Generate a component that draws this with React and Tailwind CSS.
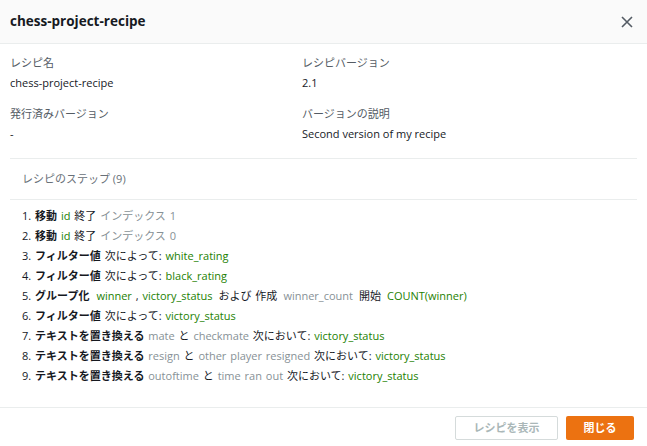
import React from 'react';

const G = ({ children }) => <span className="text-[#1d8102]">{children}</span>;
const M = ({ children }) => <span className="text-[#879196]">{children}</span>;
const B = ({ children }) => <span className="font-bold">{children}</span>;

function Detail({ label, value }) {
  return (
    <div>
      <div className="text-[#545b64] leading-[20px]">{label}</div>
      <div className="text-[#16191f] leading-[20px]">{value}</div>
    </div>
  );
}

export default function App() {
  const steps = [
    <>1. <B>移動</B> <G>id</G> 終了 <M>インデックス 1</M></>,
    <>2. <B>移動</B> <G>id</G> 終了 <M>インデックス 0</M></>,
    <>3. <B>フィルター値</B> 次によって: <G>white_rating</G></>,
    <>4. <B>フィルター値</B> 次によって: <G>black_rating</G></>,
    <>5. <B>グループ化</B><span className="ml-[7px]" /><G>winner</G> , <G>victory_status</G><span className="ml-[6px]" />および 作成<span className="ml-[6px]" /><M>winner_count</M><span className="ml-[6px]" />開始<span className="ml-[6px]" /><G>COUNT(winner)</G></>,
    <>6. <B>フィルター値</B> 次によって: <G>victory_status</G></>,
    <>7. <B>テキストを置き換える</B> <M>mate</M> と <M>checkmate</M> 次において: <G>victory_status</G></>,
    <>8. <B>テキストを置き換える</B> <M>resign</M> と <M>other player resigned</M> 次において: <G>victory_status</G></>,
    <>9. <B>テキストを置き換える</B> <M>outoftime</M> と <M>time ran out</M> 次において: <G>victory_status</G></>,
  ];

  return (
    <div
      className="w-[647px] h-[446px] bg-white text-[11px] text-[#16191f] flex flex-col overflow-hidden"
      style={{ fontFamily: '"Open Sans", "Noto Sans CJK JP", sans-serif' }}
    >
      <div className="h-[44px] shrink-0 bg-[#fafafa] border-b border-[#eaeded] flex items-center justify-between px-[10px]">
        <div className="text-[13.5px] font-bold text-[#16191f]">chess-project-recipe</div>
        <svg width="12" height="12" viewBox="0 0 12 12" className="mr-[4px]">
          <path d="M1 1 L11 11 M11 1 L1 11" stroke="#545b64" strokeWidth="1.6" fill="none" />
        </svg>
      </div>

      <div className="flex-1 px-[10px]">
        <div className="grid grid-cols-[292px_1fr] gap-y-[11px] pt-[9px] pb-[14px] border-b border-[#eaeded]">
          <Detail label="レシピ名" value="chess-project-recipe" />
          <Detail label="レシピバージョン" value="2.1" />
          <Detail label="発行済みバージョン" value="-" />
          <Detail label="バージョンの説明" value="Second version of my recipe" />
        </div>
        <div className="px-[12px] py-[10px] leading-[20px] text-[#687078] border-b border-[#eaeded]">
          レシピのステップ (9)
        </div>
        <div className="px-[12px] pt-[6px] [word-spacing:1px]">
          {steps.map((s, i) => (
            <div key={i} className="leading-[20px] h-[20px] whitespace-nowrap">{s}</div>
          ))}
        </div>
      </div>

      <div className="h-[39px] shrink-0 border-t border-[#eaeded] flex items-start justify-end gap-[8px] pt-[8px] pr-[13px]">
        <button className="h-[24px] w-[103px] border border-[#d5dbdb] rounded-[2px] text-[#aab7b8] font-bold bg-white">
          レシピを表示
        </button>
        <button className="h-[24px] w-[68px] rounded-[2px] bg-[#ec7211] text-white font-bold">
          閉じる
        </button>
      </div>
    </div>
  );
}
